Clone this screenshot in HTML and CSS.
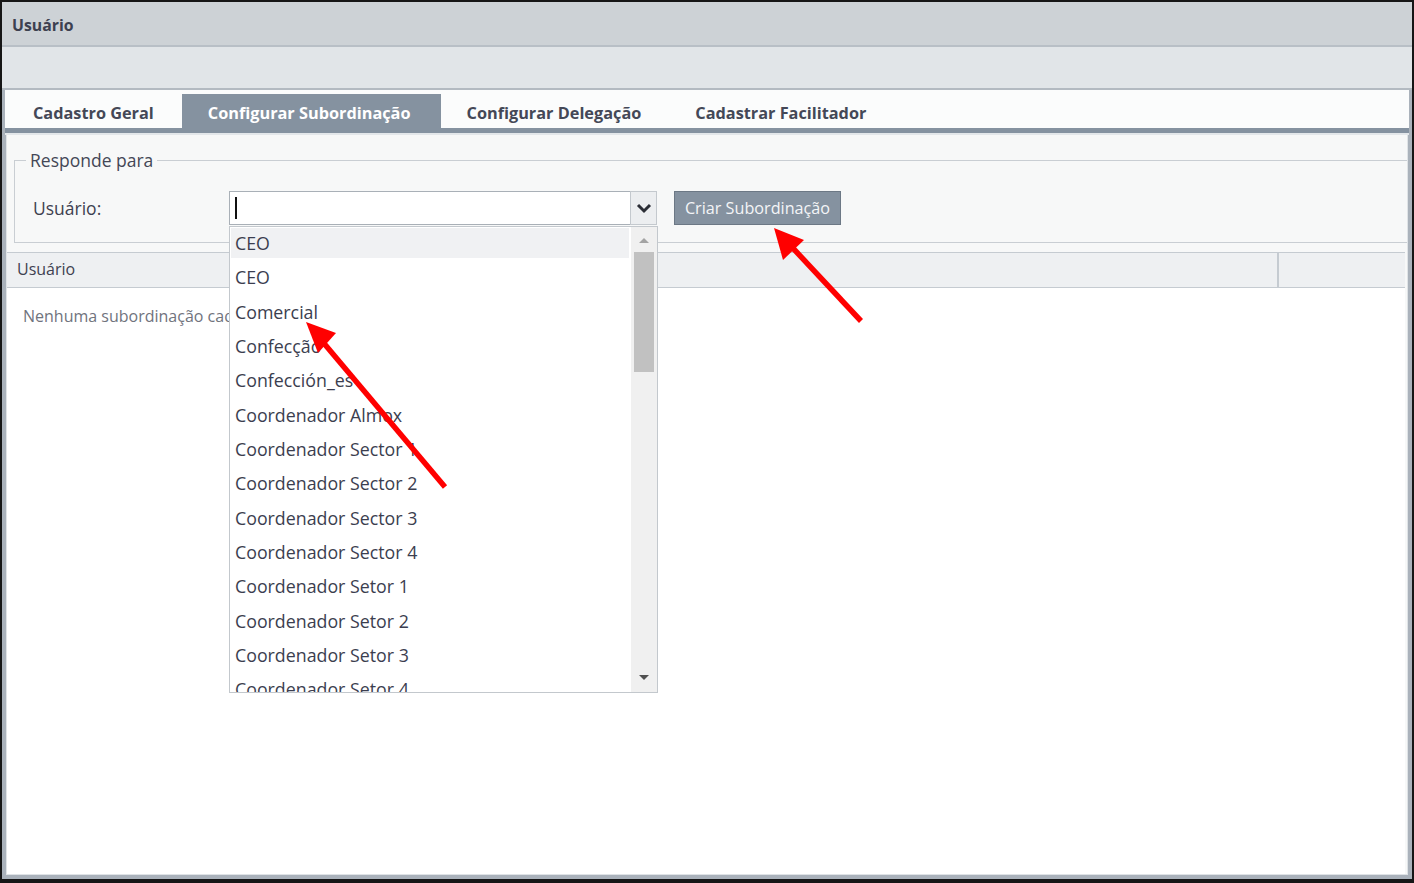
FILE: index.html
```html
<!DOCTYPE html>
<html lang="pt-BR">
<head>
  <meta charset="UTF-8">
  <meta name="viewport" content="width=device-width, initial-scale=1.0">
  <title>Usuário</title>
  <link rel="stylesheet" href="styles.css">
</head>
<body>
  <div class="window">
    <div class="title">Usuário</div>
    <div class="toolbar"></div>

    <div class="tabs">
      <div class="tab">Cadastro Geral</div>
      <div class="tab active">Configurar Subordinação</div>
      <div class="tab">Configurar Delegação</div>
      <div class="tab">Cadastrar Facilitador</div>
    </div>
    <div class="tab-bar"></div>

    <div class="panel">
      <fieldset class="group">
        <legend>Responde para</legend>
        <div class="field-row">
          <label class="field-label">Usuário:</label>
          <div class="combo">
            <div class="combo-input"><span class="caret"></span></div>
            <div class="combo-toggle">
              <svg width="16" height="12" viewBox="0 0 16 12"><path d="M2 3 L8 9 L14 3" fill="none" stroke="#2b2e36" stroke-width="3"/></svg>
            </div>

            <div class="dropdown">
              <ul class="options">
                <li class="selected">CEO</li>
                <li>CEO</li>
                <li>Comercial</li>
                <li>Confecção</li>
                <li>Confección_es</li>
                <li>Coordenador Almox</li>
                <li>Coordenador Sector 1</li>
                <li>Coordenador Sector 2</li>
                <li>Coordenador Sector 3</li>
                <li>Coordenador Sector 4</li>
                <li>Coordenador Setor 1</li>
                <li>Coordenador Setor 2</li>
                <li>Coordenador Setor 3</li>
                <li>Coordenador Setor 4</li>
              </ul>
              <div class="scrollbar">
                <svg class="scroll-up" width="12" height="8" viewBox="0 0 12 8"><path d="M1 7 L6 2 L11 7 Z" fill="#a3a3a3"/></svg>
                <div class="thumb"></div>
                <svg class="scroll-down" width="12" height="8" viewBox="0 0 12 8"><path d="M1 1 L6 6 L11 1 Z" fill="#505050"/></svg>
              </div>
            </div>
          </div>
          <button class="btn">Criar Subordinação</button>
        </div>
      </fieldset>

      <div class="grid">
        <div class="grid-head">
          <div class="col-main">Usuário</div>
          <div class="col-extra"></div>
        </div>
        <div class="grid-body">
          <p class="empty">Nenhuma subordinação cadastrada.</p>
        </div>
      </div>
    </div>
  </div>

  <!-- setas de destaque -->
  <svg class="marks" width="1414" height="883" viewBox="0 0 1414 883">
    <line x1="445" y1="487" x2="322" y2="341" stroke="#ff0000" stroke-width="5.5"/>
    <path d="M306 322 L336 333 L318 353 Z" fill="#ff0000"/>
    <line x1="861" y1="321" x2="790" y2="245" stroke="#ff0000" stroke-width="5.5"/>
    <path d="M774 228 L804 240 L783 260 Z" fill="#ff0000"/>
  </svg>
</body>
</html>
```

FILE: styles.css
```css
* {
  box-sizing: border-box;
}

body {
  margin: 0;
  font-family: "Open Sans", "Noto Sans", sans-serif;
  color: #3e4150;
  position: relative;
}

.window {
  width: 1414px;
  height: 883px;
  border: 2px solid #161616;
  border-bottom-width: 4px;
  background: #aab2bb;
  display: flex;
  flex-direction: column;
}

.title {
  height: 45px;
  background: #cdd2d6;
  border-bottom: 2px solid #b8bfc6;
  padding: 3px 0 0 10px;
  font-weight: 700;
  font-size: 15.8px;
  line-height: 40px;
  color: #3d4150;
}

.toolbar {
  height: 43px;
  background: #e1e5e8;
  border-bottom: 2px solid #b3bac1;
}

.tabs {
  height: 38px;
  margin: 0 3px;
  background: #fbfcfc;
  display: flex;
  align-items: flex-end;
  padding-left: 2px;
}

.tab {
  height: 34px;
  padding: 0 28px 0 26px;
  font-weight: 700;
  font-size: 16.3px;
  line-height: 39px;
  color: #444857;
}

.tab.active {
  background: #8592a0;
  color: #ffffff;
  padding-right: 30px;
}

.tab-bar {
  height: 7px;
  margin: 0 3px;
  background: #8592a0;
  border-bottom: 2px solid #e3e7ea;
}

.panel {
  flex: 1;
  margin: 0 4px 4px 4px;
  background: #f7f8f8;
  border: 1px solid #dfe3e6;
  border-top: none;
  display: flex;
  flex-direction: column;
}

.group {
  margin: 14px 0 0 7px;
  padding: 0 0 17px 11px;
  border: 1px solid #c9ced3;
  border-right: none;
}

.group legend {
  padding: 0 4px;
  font-size: 17.5px;
  line-height: 23px;
  color: #444756;
}

.field-row {
  display: flex;
  align-items: center;
  margin-top: 19px;
  padding-left: 7px;
}

.field-label {
  width: 196px;
  font-size: 17.5px;
  color: #3e4150;
}

.combo {
  position: relative;
  display: flex;
  height: 34px;
}

.combo-input {
  width: 401px;
  height: 34px;
  background: #ffffff;
  border: 1px solid #a9b0b7;
  border-right: none;
  padding: 5px 0 0 5px;
}

.caret {
  display: block;
  width: 2px;
  height: 22px;
  background: #111111;
}

.combo-toggle {
  width: 27px;
  height: 34px;
  background: #eceef0;
  border: 1px solid #c4c9ce;
  display: flex;
  align-items: center;
  justify-content: center;
}

.btn {
  margin-left: 17px;
  width: 167px;
  height: 34px;
  background: #8592a0;
  border: 1px solid #6c7885;
  color: #f4f5f7;
  font-family: "Open Sans", "Noto Sans", sans-serif;
  font-size: 16.2px;
  padding: 0;
}

.dropdown {
  position: absolute;
  top: 35px;
  left: 0;
  width: 429px;
  height: 467px;
  background: #ffffff;
  border: 1px solid #c3c8cd;
  display: flex;
  z-index: 5;
  overflow: hidden;
}

.options {
  list-style: none;
  margin: 0;
  padding: 1px 0 0 1px;
  flex: 1;
}

.options li {
  height: 30px;
  margin-bottom: 4.33px;
  padding-left: 4px;
  font-size: 17.8px;
  line-height: 30px;
  color: #3b3e4f;
  white-space: nowrap;
}

.options li.selected {
  background: #f0f1f3;
  margin-right: 2px;
}

.scrollbar {
  width: 26px;
  background: #f0f0f0;
  display: flex;
  flex-direction: column;
  align-items: center;
  padding-top: 9px;
}

.thumb {
  width: 20px;
  height: 120px;
  margin-top: 8px;
  background: #c1c1c1;
}

.scroll-down {
  margin-top: auto;
  margin-bottom: 10px;
}

.grid {
  flex: 1;
  margin: 9px 2px 0 0;
  display: flex;
  flex-direction: column;
}

.grid-head {
  display: flex;
  height: 36px;
  background: #eef0f2;
  border-top: 1px solid #c5cbd1;
  border-bottom: 1px solid #c5cbd1;
}

.col-main {
  flex: 1;
  padding-left: 10px;
  font-size: 16px;
  line-height: 33px;
  color: #3e4150;
  border-right: 2px solid #c5cbd1;
}

.col-extra {
  width: 126px;
}

.grid-body {
  flex: 1;
  background: #ffffff;
}

.empty {
  margin: 17px 0 0 16px;
  font-size: 16px;
  color: #70737d;
}

.marks {
  position: absolute;
  top: 0;
  left: 0;
  pointer-events: none;
  z-index: 10;
}
```
